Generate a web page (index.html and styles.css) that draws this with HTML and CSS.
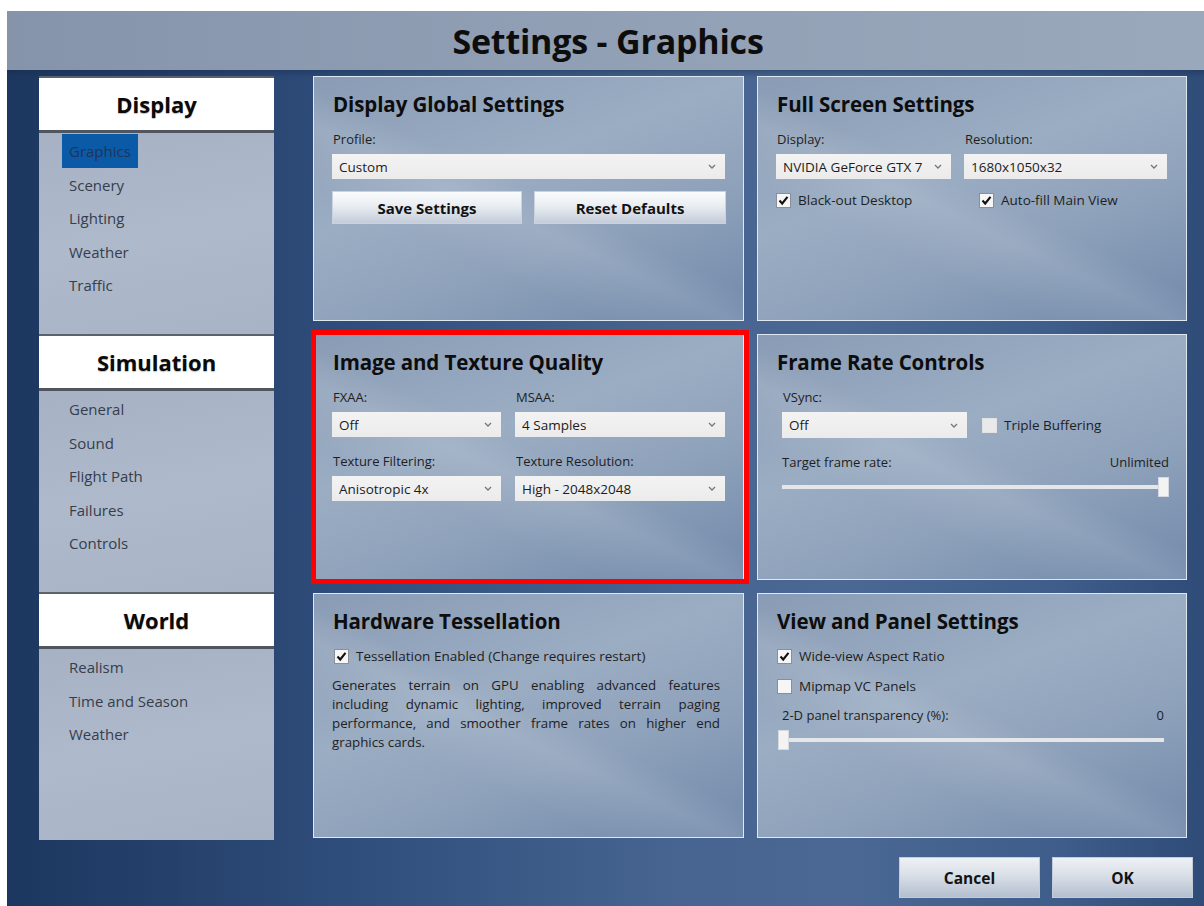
FILE: index.html
```html
<!DOCTYPE html>
<html lang="en">
<head>
<meta charset="utf-8">
<title>Settings - Graphics</title>
<link rel="stylesheet" href="styles.css">
</head>
<body>
<div class="window">
  <header class="titlebar"><h1>Settings - Graphics</h1></header>
  <div class="body">
    <nav class="nav">
      <section class="nav-section">
        <h2 class="nav-head">Display</h2>
        <ul class="nav-list list-display">
          <li><a class="nav-item active">Graphics</a></li>
          <li><a class="nav-item">Scenery</a></li>
          <li><a class="nav-item">Lighting</a></li>
          <li><a class="nav-item">Weather</a></li>
          <li><a class="nav-item">Traffic</a></li>
        </ul>
      </section>
      <section class="nav-section">
        <h2 class="nav-head">Simulation</h2>
        <ul class="nav-list list-sim">
          <li><a class="nav-item">General</a></li>
          <li><a class="nav-item">Sound</a></li>
          <li><a class="nav-item">Flight Path</a></li>
          <li><a class="nav-item">Failures</a></li>
          <li><a class="nav-item">Controls</a></li>
        </ul>
      </section>
      <section class="nav-section">
        <h2 class="nav-head">World</h2>
        <ul class="nav-list list-world">
          <li><a class="nav-item">Realism</a></li>
          <li><a class="nav-item">Time and Season</a></li>
          <li><a class="nav-item">Weather</a></li>
        </ul>
      </section>
    </nav>

    <main class="content">
      <div class="grid">
        <!-- Display Global Settings -->
        <section class="panel">
          <h3 class="panel-title">Display Global Settings</h3>
          <div class="label">Profile:</div>
          <div class="select"><span>Custom</span><svg class="chev" width="8" height="5" viewBox="0 0 8 5"><path d="M1 1 L4 4 L7 1"/></svg></div>
          <div class="btn-row">
            <button class="btn">Save Settings</button>
            <button class="btn">Reset Defaults</button>
          </div>
        </section>

        <!-- Full Screen Settings -->
        <section class="panel">
          <h3 class="panel-title">Full Screen Settings</h3>
          <div class="pair pair-fs">
            <div>
              <div class="label">Display:</div>
              <div class="select"><span>NVIDIA GeForce GTX 7</span><svg class="chev" width="8" height="5" viewBox="0 0 8 5"><path d="M1 1 L4 4 L7 1"/></svg></div>
            </div>
            <div>
              <div class="label">Resolution:</div>
              <div class="select"><span>1680x1050x32</span><svg class="chev" width="8" height="5" viewBox="0 0 8 5"><path d="M1 1 L4 4 L7 1"/></svg></div>
            </div>
          </div>
          <div class="check-row fs-checks">
            <label class="check"><span class="box"><svg width="15" height="15" viewBox="0 0 15 15"><path d="M3.5 7.5 L6.2 10.5 L11.5 3.8"/></svg></span>Black-out Desktop</label>
            <label class="check"><span class="box"><svg width="15" height="15" viewBox="0 0 15 15"><path d="M3.5 7.5 L6.2 10.5 L11.5 3.8"/></svg></span>Auto-fill Main View</label>
          </div>
        </section>

        <!-- Image and Texture Quality -->
        <section class="panel panel-marked">
          <h3 class="panel-title">Image and Texture Quality</h3>
          <div class="pair pair-itq">
            <div>
              <div class="label">FXAA:</div>
              <div class="select"><span>Off</span><svg class="chev" width="8" height="5" viewBox="0 0 8 5"><path d="M1 1 L4 4 L7 1"/></svg></div>
            </div>
            <div>
              <div class="label">MSAA:</div>
              <div class="select"><span>4 Samples</span><svg class="chev" width="8" height="5" viewBox="0 0 8 5"><path d="M1 1 L4 4 L7 1"/></svg></div>
            </div>
          </div>
          <div class="pair pair-itq pair-gap">
            <div>
              <div class="label">Texture Filtering:</div>
              <div class="select"><span>Anisotropic 4x</span><svg class="chev" width="8" height="5" viewBox="0 0 8 5"><path d="M1 1 L4 4 L7 1"/></svg></div>
            </div>
            <div>
              <div class="label">Texture Resolution:</div>
              <div class="select"><span>High - 2048x2048</span><svg class="chev" width="8" height="5" viewBox="0 0 8 5"><path d="M1 1 L4 4 L7 1"/></svg></div>
            </div>
          </div>
        </section>

        <!-- Frame Rate Controls -->
        <section class="panel">
          <h3 class="panel-title">Frame Rate Controls</h3>
          <div class="indent">
            <div class="label">VSync:</div>
            <div class="vsync-row">
              <div class="select select-vsync"><span>Off</span><svg class="chev" width="8" height="5" viewBox="0 0 8 5"><path d="M1 1 L4 4 L7 1"/></svg></div>
              <label class="check"><span class="box box-off"></span>Triple Buffering</label>
            </div>
            <div class="slider-head fr-head"><span>Target frame rate:</span><span>Unlimited</span></div>
            <div class="slider slider-fr"><span class="thumb" style="left: 100%"></span></div>
          </div>
        </section>

        <!-- Hardware Tessellation -->
        <section class="panel">
          <h3 class="panel-title">Hardware Tessellation</h3>
          <label class="check check-tess"><span class="box"><svg width="15" height="15" viewBox="0 0 15 15"><path d="M3.5 7.5 L6.2 10.5 L11.5 3.8"/></svg></span>Tessellation Enabled (Change requires restart)</label>
          <p class="desc">
            <span class="line">Generates terrain on GPU enabling advanced features</span>
            <span class="line">including dynamic lighting, improved terrain paging</span>
            <span class="line">performance, and smoother frame rates on higher end</span>
            <span class="line line-last">graphics cards.</span>
          </p>
        </section>

        <!-- View and Panel Settings -->
        <section class="panel">
          <h3 class="panel-title">View and Panel Settings</h3>
          <div class="check-col">
            <label class="check"><span class="box"><svg width="15" height="15" viewBox="0 0 15 15"><path d="M3.5 7.5 L6.2 10.5 L11.5 3.8"/></svg></span>Wide-view Aspect Ratio</label>
            <label class="check"><span class="box"></span>Mipmap VC Panels</label>
          </div>
          <div class="slider-head vp-head"><span>2-D panel transparency (%):</span><span>0</span></div>
          <div class="slider slider-vp"><span class="thumb" style="left: 0%"></span></div>
        </section>
      </div>

      <div class="actions">
        <button class="btn btn-big">Cancel</button>
        <button class="btn btn-big">OK</button>
      </div>
    </main>
  </div>
</div>
</body>
</html>
```

FILE: styles.css
```css
* { box-sizing: border-box; }

html, body {
  margin: 0;
  padding: 0;
  background: #ffffff;
}

body {
  font-family: "Open Sans", "Noto Sans", "Liberation Sans", sans-serif;
  color: #1b1b1b;
}

.window {
  margin: 11px 0 0 7px;
  width: 1197px;
  height: 895px;
  display: flex;
  flex-direction: column;
  overflow: hidden;
}

/* ---- title bar ---- */
.titlebar {
  height: 59px;
  flex: none;
  background: linear-gradient(90deg, #8594aa 0%, #909fb4 45%, #9aa8bb 100%);
  display: flex;
  align-items: center;
  justify-content: center;
}

.titlebar h1 {
  margin: 0;
  font-size: 34px;
  font-weight: 700;
  letter-spacing: -0.2px;
  color: #0d0d0d;
  line-height: 42px;
  padding-left: 5px;
}

/* ---- body ---- */
.body {
  flex: 1;
  display: flex;
  padding: 6px 11px 0 32px;
  background:
    linear-gradient(180deg, rgba(18, 38, 70, 0.35) 0px, rgba(18, 38, 70, 0) 8px),
    linear-gradient(90deg, #1c375f 0%, #243f69 12%, #2f4d7b 28%, #46648f 55%, #4a6893 70%, #3f5d8a 88%, #2f4b78 100%);
}

/* ---- navigation ---- */
.nav {
  width: 235px;
  flex: none;
  display: flex;
  flex-direction: column;
}

.nav-head {
  margin: 0;
  height: 57px;
  background: #ffffff;
  border-top: 2px solid #5b626c;
  border-bottom: 3px solid #4f565f;
  text-align: center;
  font-size: 22px;
  font-weight: 700;
  line-height: 52px;
  color: #0a0a0a;
  text-shadow: 0 1px 1px rgba(0, 0, 0, 0.25);
}

.nav-list {
  list-style: none;
  margin: 0;
  padding: 1px 0 0 23px;
  background: linear-gradient(170deg, #a6b2c4 0%, #aebacb 50%, #a8b4c6 100%);
}

.list-display { height: 201px; }
.list-sim { height: 201px; }
.list-world { height: 191px; }

.nav-item {
  display: inline-block;
  height: 33.5px;
  line-height: 34.5px;
  padding: 0 7px;
  font-size: 15px;
  color: #363d4b;
}

.nav-item.active {
  background: #0b5aa8;
  color: #1d3557;
}

/* ---- content ---- */
.content {
  margin-left: 39px;
  flex: 1;
  display: flex;
  flex-direction: column;
}

.grid {
  display: grid;
  grid-template-columns: 431px 430px;
  grid-template-rows: 245px 246px 245px;
  column-gap: 13px;
  row-gap: 13px;
}

.panel {
  position: relative;
  border: 1px solid #dfe7f0;
  padding: 13px 18px 0 18px;
  background:
    linear-gradient(205deg, rgba(255, 255, 255, 0) 48%, rgba(255, 255, 255, 0.10) 56%, rgba(255, 255, 255, 0) 70%),
    linear-gradient(160deg, #8a9cb5 0%, #9badc3 40%, #8fa2bb 65%, #7189aa 100%);
}

/* red outline drawn over the texture quality panel */
.panel-marked::after {
  content: "";
  position: absolute;
  top: -5px;
  left: -3px;
  right: -6px;
  bottom: -5px;
  border: 5px solid #ff0000;
  pointer-events: none;
}

.panel-title {
  margin: 0 0 0 1px;
  font-size: 20.5px;
  font-weight: 700;
  line-height: 28px;
  color: #0d0d0d;
  letter-spacing: -0.1px;
}

.label {
  margin-top: 12px;
  font-size: 13px;
  line-height: 18px;
  color: #1e1e1e;
  padding-left: 1px;
}

.select {
  margin-top: 6px;
  height: 25px;
  display: flex;
  align-items: center;
  justify-content: space-between;
  padding: 0 9px 0 7px;
  background: linear-gradient(180deg, #f3f3f3 0%, #ebebeb 100%);
  font-size: 13.5px;
  color: #1c1c1c;
  white-space: nowrap;
  overflow: hidden;
}

.select span {
  overflow: hidden;
}

.chev {
  flex: none;
  margin-left: 6px;
}

.chev path {
  fill: none;
  stroke: #767676;
  stroke-width: 1.3;
}

.btn-row {
  margin-top: 12px;
  display: grid;
  grid-template-columns: 190px 192px;
  column-gap: 12px;
}

.btn {
  height: 33px;
  border: 1px solid #c9d2de;
  background: linear-gradient(180deg, #fbfcfd 0%, #e9edf2 45%, #c3ccd9 100%);
  font-family: inherit;
  font-size: 15px;
  font-weight: 700;
  color: #121212;
  padding: 0;
}

/* full screen */
.pair {
  display: grid;
  column-gap: 13px;
}

.pair-fs { grid-template-columns: 175px 203px; }
.pair-itq { grid-template-columns: 169px 210px; column-gap: 14px; }
.pair-gap .label { margin-top: 15px; }

.check-row {
  display: flex;
  margin-top: 12px;
}

.fs-checks .check:first-child { width: 203px; }

.check {
  display: flex;
  align-items: center;
  gap: 7px;
  font-size: 13.5px;
  line-height: 18px;
  color: #1e1e1e;
  white-space: nowrap;
}

.box {
  width: 15px;
  height: 15px;
  flex: none;
  background: #f6f6f6;
  border: 1px solid #8a8f97;
  display: block;
  position: relative;
}

.box svg {
  position: absolute;
  top: -1px;
  left: -1px;
}

.box svg path {
  fill: none;
  stroke: #111111;
  stroke-width: 2.1;
}

.box-off {
  background: #e9e9e9;
  border-color: #e2e2e2;
}

/* frame rate */
.indent { padding-left: 6px; }

.vsync-row {
  margin-top: 6px;
  display: flex;
  align-items: center;
  gap: 15px;
}

.select-vsync {
  margin-top: 0;
  width: 185px;
  height: 26px;
}

.slider-head {
  display: flex;
  justify-content: space-between;
  font-size: 13px;
  line-height: 18px;
  color: #1e1e1e;
}

.fr-head {
  margin-top: 15px;
  width: 387px;
}

.slider {
  position: relative;
  height: 4px;
  background: #e4e6ea;
}

.slider-fr {
  margin-top: 14px;
  width: 379px;
}

.thumb {
  position: absolute;
  top: -8px;
  width: 11px;
  height: 20px;
  margin-left: -3px;
  background: #f3f3f3;
  border: 1px solid #d6d9de;
}

/* tessellation */
.check-tess {
  margin-top: 12px;
  padding-left: 2px;
}

.desc {
  margin: 11px 0 0 0;
  width: 388px;
  font-size: 13.3px;
  line-height: 19px;
  color: #1e1e1e;
}

.desc .line {
  display: block;
  text-align: justify;
  text-align-last: justify;
}

.desc .line-last {
  text-align-last: left;
}

/* view and panel */
.check-col {
  margin-top: 12px;
  display: flex;
  flex-direction: column;
  gap: 12px;
  padding-left: 1px;
}

.vp-head {
  margin-top: 11px;
  width: 388px;
  padding-left: 6px;
}

.slider-vp {
  margin-top: 14px;
  margin-left: 6px;
  width: 382px;
}

.slider-vp .thumb { margin-left: -4px; }

/* dialog buttons */
.actions {
  margin-top: 19px;
  display: flex;
  justify-content: flex-end;
  gap: 12px;
}

.btn-big {
  width: 141px;
  height: 41px;
  font-size: 15.5px;
  border-color: #c3ccd8;
  background: linear-gradient(180deg, #eef1f5 0%, #d9dfe7 45%, #b3bfcf 100%);
}
```
